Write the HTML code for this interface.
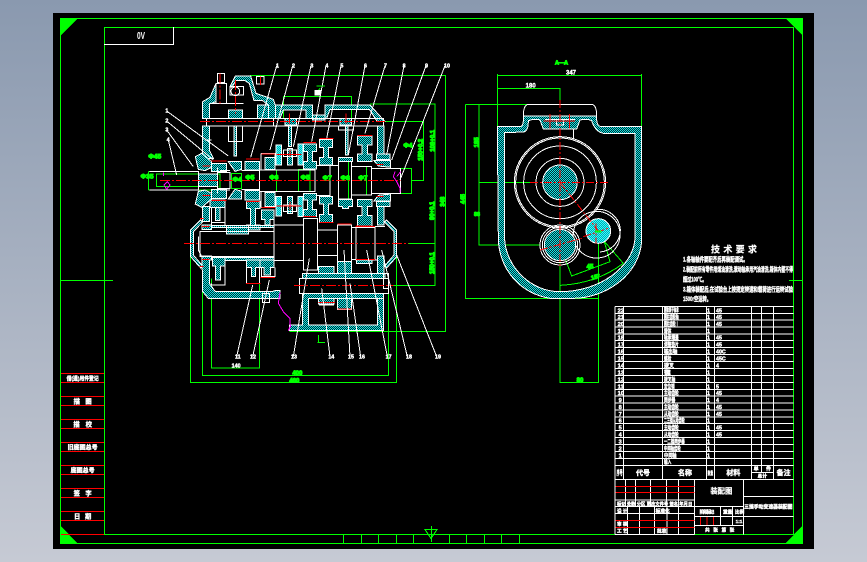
<!DOCTYPE html>
<html><head><meta charset="utf-8"><style>
html,body{margin:0;padding:0;width:867px;height:562px;overflow:hidden;background:linear-gradient(180deg,#8a99af 0%,#c6cad4 100%)}
svg{position:absolute;left:0;top:0}
text{font-family:"Liberation Sans","Noto Sans CJK SC",sans-serif;font-weight:bold}
.w{fill:#fff;stroke:#fff;stroke-width:1.2}
.g{fill:#0f0;stroke:#0f0;stroke-width:3}
.hat{fill:url(#h);stroke:#fff;stroke-width:3}
.wl{fill:none;stroke:#fff;stroke-width:3}
.gl{fill:none;stroke:#0f0;stroke-width:3}
.rl{fill:none;stroke:#f00;stroke-width:3}
.cl{fill:none;stroke:#f00;stroke-width:3;stroke-dasharray:30 6 6 6}
.ml{fill:none;stroke:#f0f;stroke-width:3}
</style></head><body>
<svg width="867" height="562" viewBox="0 0 867 562" shape-rendering="crispEdges">
<defs>
<pattern id="h" width="6" height="6" patternUnits="userSpaceOnUse"><rect width="6" height="6" fill="#002f33"/><path d="M0 0h3v3H0zM3 3h3v3H3z" fill="#17e6e6"/></pattern>
<pattern id="h2" width="6" height="6" patternUnits="userSpaceOnUse"><rect width="6" height="6" fill="#00a8b0"/><path d="M0 0h3v3H0zM3 3h3v3H3z" fill="#3ff"/></pattern>
</defs>
<rect x="53" y="13" width="761" height="536" fill="#000"/>
<!-- frames -->
<g fill="none" stroke="#0f0" stroke-width="1">
<rect x="60.5" y="18.5" width="742" height="525"/>
<rect x="104.5" y="27.5" width="689" height="507"/>
<path d="M343.5 534v9M361.5 534v9M378.5 534v9M396.5 534v9M413.5 534v9M449.5 534v9M466.5 534v9M484.5 534v9M501.5 534v9M519.5 534v9M60 280.5h53M789 280.5h14"/>
<path d="M431.5 526v16M425 529.5h12l-6 9z"/>
</g>
<path d="M60 18H78L60 36ZM785 18H803V36ZM803 525V544H785ZM60 525L78 544H60Z" fill="#0f0"/>
<path d="M104 44.5H173.5V27" fill="none" stroke="#fff"/>
<text x="141" y="39" font-size="10" fill="#fff" text-anchor="middle" textLength="8" lengthAdjust="spacingAndGlyphs">0V</text>

<!-- left column -->
<g transform="translate(50 360) scale(.33333)">
<path class="rl" d="M33 40H162M33 67H162M33 109H162M33 136H162M33 178H162M33 205H162M33 247H162M33 274H162M33 316H162M33 343H162M33 385H162M33 412H162M33 454H162M33 481H162M33 523H162"/>
<g text-anchor="middle">
<text class="w" x="98" y="61" font-size="17" textLength="96" lengthAdjust="spacingAndGlyphs">借(通)用件登记</text>
<text class="w" x="98" y="131" font-size="19" textLength="54" lengthAdjust="spacing">描 图</text>
<text class="w" x="98" y="200" font-size="19" textLength="56" lengthAdjust="spacing">描 校</text>
<text class="w" x="98" y="269" font-size="18" textLength="90" lengthAdjust="spacing">旧底图总号</text>
<text class="w" x="98" y="338" font-size="18" textLength="72" lengthAdjust="spacing">底图总号</text>
<text class="w" x="98" y="407" font-size="19" textLength="54" lengthAdjust="spacing">签 字</text>
<text class="w" x="98" y="476" font-size="19" textLength="52" lengthAdjust="spacing">日 期</text>
</g>
</g>

<!-- main view -->
<g transform="translate(130 50) scale(.33333)">
<!-- green dims -->
<path class="gl" d="M360 77H947V844H478M720 162H915V706H790M765 214H880V391H845M835 580H915M55 365H205M55 420H270V372H80V410H265M55 365V420M460 205V140H665V205M305 370H335V415H305ZM367 362H388V418H367M440 360V425M505 358H540V425H505ZM600 347V437M655 335V447M665 350H710V435H665M725 355H845V430H725M182 605V998H800V605M217 685V976H776V710M245 685V954H388V685M565 855V878M562 878H585"/>
<!-- housing -->
<path class="hat" d="M218 205V155L240 142L258 100V155L238 162V205Z"/>
<path class="hat" d="M218 228H238V300L250 325H218Z"/>
<path class="hat" d="M300 110L316 78H362L378 130L430 148L436 165V205H415V165L398 152H372L358 100L345 92H318L305 112Z"/>
<path class="hat" d="M382 165H415V205H382Z"/>
<path class="hat" d="M436 165H548V205H528V180H460L450 205H436Z"/>
<path class="hat" d="M548 195H585V210H548Z"/>
<path class="hat" d="M585 165H720L765 215H742L718 178H600L590 205H585Z"/>
<path class="hat" d="M742 228H762V318H742Z"/>
<path class="hat" d="M296 180H338V205H296ZM465 205H500V225H465ZM630 205H665V225H630Z"/>
<path class="hat" d="M312 228H320V318H312Z"/>
<path class="hat" d="M476 228H484V290H476ZM646 228H654V315H646Z"/>
<path class="wl" d="M296 228V275H338V228M460 228H508M625 228V240H670V228M230 205H760V228H230ZM430 205V228M225 270H245"/>
<path class="wl" d="M300 110H340V135H300Z"/>
<circle class="wl" cx="316" cy="124" r="13"/>
<path class="wl" d="M262 70H284V98H262ZM258 100H290V160H258ZM238 160H340M380 80H402V102H380Z"/>
<!-- left bearing -->
<path class="hat" d="M196 320L215 310L245 335V352L225 362L205 358Z"/>
<path class="hat" d="M196 462L215 472L245 447V430L225 420L205 424Z"/>
<path class="hat" d="M245 340H290V365H245ZM245 418H290V445H245Z"/>
<path class="hat" d="M295 335H335V358L315 364ZM295 447H335V424L315 418Z"/>
<path class="hat" d="M345 335H388V360H345ZM345 422H388V450H345Z"/>
<path class="hat" d="M405 322H435V358H405ZM405 427H435V470H405Z"/>
<path class="wl" d="M393 310H435V322M393 310V358M393 472H435M393 425V472"/>
<path class="hat" style="fill:url(#h2)" d="M438 285H454V345H438ZM438 440H454V498H438ZM504 282H519V345H504ZM504 440H519V500H504Z"/>
<path class="hat" d="M472 295H488V345H472ZM472 440H488V490H472Z"/>
<path class="wl" d="M460 300H500V320H460ZM460 465H500V485H460Z"/>
<!-- I-section gears -->
<path class="hat" d="M520 282H560V305H548V335H560V357H520V335H532V305H520Z"/>
<path class="hat" d="M520 430H560V450H548V478H560V500H520V478H532V450H520Z"/>
<path class="hat" d="M568 268H608V292H596V322H608V345H568V322H580V292H568Z"/>
<path class="hat" d="M568 440H608V462H596V494H608V518H568V494H580V462H568Z"/>
<path class="hat" d="M625 322H668V335H625ZM625 448H668V470H655V475H638V470H625Z"/>
<path class="hat" d="M682 258H726V285H712V312H726V335H682V312H696V285H682Z"/>
<path class="hat" d="M682 448H726V470H712V497H726V528H682V497H696V470H682Z"/>
<path class="hat" d="M732 332H782V352L745 348ZM732 453H782V432L745 436Z"/>
<path class="hat" d="M740 312H780V328H740ZM740 470H780V455H740Z"/>
<!-- shaft -->
<path class="wl" d="M58 365H205V420H58M205 372H262V410H205M262 368H300V416H262ZM335 362H388V418H335M388 360H555V425H388M558 347H600V437H558M600 347H625M625 335H665V447H625ZM665 350H725V435H665M725 355H812V430H725"/>
<path class="hat" d="M205 372H262V410H205Z"/>
<path class="wl" d="M262 352V430M270 362H300M270 420H300"/>
<!-- lower gears -->
<path class="hat" d="M240 450H285V472H240Z"/>
<path class="hat" d="M256 472H270V512H256Z"/>
<path class="wl" d="M245 472V530H285V472M245 518H285"/>
<path class="hat" d="M350 455H390V475H376V525H390V540H350V525H362V475H350Z"/>
<path class="hat" d="M395 480H432V508H420V525H405V508H395Z"/>
<!-- lower left body -->
<path class="hat" d="M182 540L212 510L218 516L190 545V615L218 648L212 654L182 620Z"/>
<path class="hat" d="M800 540L770 510L764 516L792 545V615L764 648L770 654L800 620Z"/>
<path class="hat" d="M218 470H238V515H218ZM742 470H762V525H742Z"/>
<path class="hat" d="M216 525H245V538H216ZM290 527H355V552H290ZM245 527H432V533H245Z"/>
<path class="hat" d="M216 618H245V630H238V700L256 725H425L435 722H450V745H235L218 725Z"/>
<path class="hat" d="M285 622H432V631H285ZM248 622H285V648H272V690H256V648H248Z"/>
<path class="hat" d="M350 630H390V652H376V680H364V652H350ZM390 630H432V652H422V675H402V652H390Z"/>
<path class="wl" d="M210 545H432V620H210ZM205 560V600L215 620M245 700V705H285V650M350 652V700H388V652M395 652V680H435V652M432 490V630M432 525H520M432 631H520"/>
<path class="wl" d="M520 505H562V660H520ZM562 540H622M562 616H622M622 525H665V635H622ZM665 532H678M665 628H678M678 532H735V630H678ZM735 530H765M735 630H765"/>
<path class="hat" d="M566 650H612V680H566ZM622 635H665V672H622ZM742 618H762V680H742ZM680 630H726V640H680Z"/>
<!-- lower box -->
<path class="hat" d="M518 670H765V685H518Z"/>
<path class="hat" d="M518 730H760V745H535V825H743V745H760V842H478V825H518Z"/>
<path class="hat" d="M565 745H612V762H565ZM622 745H665V778H622Z"/>
<path class="wl" d="M508 686H776V730H508ZM508 686V730M568 760V765H612M622 778H665"/>
<path class="wl" d="M760 670H776V716H760Z"/>
<path class="wl" d="M398 730H418V758H398Z"/>
<!-- centre lines -->
<path class="cl" d="M210 214H765M90 391H812M162 580H835M492 706H790M316 90V190M392 80V105M270 70V165M478 190V220M648 190V220"/>
<!-- red marks -->
<path class="rl" d="M520 278H558M568 265H610M682 257H726M348 327H388M395 312H435M245 333H290M218 348H240M218 436H240M245 451H290M350 455H388M395 472H435M520 500H558M568 517H610M622 522H665M678 528H725M740 343H760M740 440H760M440 313H515M440 468H515M480 455V480M480 300V320M676 530H735M565 757H615M622 777H665M348 700H392M392 682H435M216 530H238M216 628H238M208 650H220M210 505H222M678 628H735"/>
<!-- magenta -->
<path class="ml" d="M100 368V378M112 395L102 405L110 418L120 405ZM795 365L790 380L800 395L810 415V428M812 365L800 380M450 727L445 760L460 785L480 805L481 830L475 842"/>
<!-- leaders -->
<path class="wl" d="M440 47L362 322M488 47L420 300M543 47L490 290M588 47L545 275M633 47L590 265M705 47L655 315M765 47L705 250M822 47L770 315M888 47L785 330M945 47L810 390M110 183L295 318M110 213L250 330M110 240L190 350M115 270L140 375M320 920L368 705M368 920L418 690M490 920L538 625M600 920L575 715M660 920L642 600M692 920L660 700M772 920L710 600M832 920L755 600M920 920L800 615"/>
<g font-size="16">
<text x="438" y="52" class="w">1</text><text x="486" y="52" class="w">2</text><text x="541" y="52" class="w">3</text><text x="586" y="52" class="w">4</text><text x="631" y="52" class="w">5</text><text x="702" y="52" class="w">6</text><text x="762" y="52" class="w">7</text><text x="818" y="52" class="w">8</text><text x="885" y="52" class="w">9</text><text x="942" y="52" class="w">10</text>
<text x="106" y="188" class="w">1</text><text x="106" y="218" class="w">2</text><text x="106" y="245" class="w">3</text><text x="110" y="275" class="w">4</text>
<text x="315" y="926" class="w">11</text><text x="360" y="926" class="w">12</text><text x="483" y="926" class="w">13</text><text x="595" y="926" class="w">14</text><text x="654" y="926" class="w">15</text><text x="687" y="926" class="w">16</text><text x="767" y="926" class="w">17</text><text x="828" y="926" class="w">18</text><text x="915" y="926" class="w">19</text>
<text x="305" y="952" class="w">140</text>
</g>
<!-- green dim text -->
<g class="g" font-size="20">
<text x="55" y="325">Φ45</text><text x="32" y="385">Φ35</text><text x="308" y="395">Φ4</text><text x="346" y="388">Φ5</text><text x="418" y="388">Φ6</text><text x="512" y="388">Φ5</text><text x="578" y="390">Φ7</text><text x="632" y="390">Φ8</text><text x="685" y="390">Φ7</text><text x="820" y="292">Φ4</text>
<text x="487" y="975" font-size="18">400</text><text x="478" y="997" font-size="18">460</text>
<text transform="translate(878 332) rotate(-90)" font-size="18">150+0.2</text>
<text transform="translate(914 305) rotate(-90)" font-size="18">108+0.1</text>
<text transform="translate(912 510) rotate(-90)" font-size="18">90+0.1</text>
<text transform="translate(944 470) rotate(-90)" font-size="18">348</text>
<text transform="translate(912 672) rotate(-90)" font-size="18">150+0.1</text>
<path d="M555 135L570 115M560 108H585" class="gl"/>
</g>
<path class="wl" d="M555 135H572V122H555Z" style="fill:#fff"/>
</g>

<!-- section view -->
<g transform="translate(460 50) scale(.33333)">
<path class="gl" d="M112 72V230M545 72V230M112 76H545M112 115H300V150M17 163H250M17 163V745H415M57 163V585M55 397H210M55 585H240M300 590V997H415V560M302 590L335 678L450 635L430 565M302 706Q410 700 490 640L425 565"/>
<path class="hat" style="fill-rule:evenodd" d="M112 230H178Q192 232 190 198H410Q408 232 428 230H545V570C540 680 430 745 340 745H270C180 730 120 660 115 570ZM134 248V570C140 650 210 725 300 725C420 725 520 650 525 565V250H430Q405 245 395 212Q380 205 360 210L350 237H250L240 210Q225 205 205 212Q205 245 190 246Z"/>
<path class="wl" d="M190 198Q190 165 205 163H395Q410 165 410 198H190M340 237V265"/>
<g class="wl">
<circle cx="300" cy="397" r="137"/><circle cx="300" cy="397" r="133"/><circle cx="300" cy="397" r="109"/><circle cx="300" cy="397" r="72"/>
<circle cx="300" cy="585" r="60"/><circle cx="300" cy="585" r="53"/>
<path d="M349 520A70 70 0 1 1 362 605A68 68 0 0 1 349 520M410 478A66 66 0 0 1 481 540A66 66 0 0 1 420 606"/>
</g>
<circle class="hat" cx="300" cy="397" r="52"/>
<circle class="hat" cx="300" cy="585" r="47"/>
<circle class="hat" cx="415" cy="543" r="37" style="fill:url(#h2)"/>
<path class="wl" d="M255 208H345M290 208V225H310V208"/>
<path class="rl" d="M270 192V235M328 192V235M250 213H345"/>
<path class="cl" style="stroke-dasharray:24 6 6 6" d="M300 150V650M210 397H445M240 600L365 565M300 397L415 543M370 560L445 535M408 520V580"/>
<path class="gl" style="stroke-width:6" d="M405 545H425"/>
<g class="g" font-size="18">
<text x="285" y="43" font-size="16">A—A</text>
<text x="318" y="74" class="w">347</text>
<text x="197" y="113" class="w">180</text>
<text x="350" y="996">80</text>
<text x="380" y="656">45</text>
<text transform="translate(395 690) rotate(-15)">15°</text>
<text transform="translate(55 292) rotate(-90)">185</text>
<text x="42" y="498" font-size="16">88</text>
<text transform="translate(15 462) rotate(-90)">445</text>
</g>
</g>

<!-- tech + table -->
<g transform="translate(605 235) scale(.33333)">
<text class="w" x="318" y="52" font-size="27" textLength="138" lengthAdjust="spacing" style="stroke-width:.6">技 术 要 求</text>
<g font-size="19">
<text class="w" x="234" y="80" textLength="194" lengthAdjust="spacingAndGlyphs">1.各轴轴件要配齐后再装配调试。</text>
<text class="w" x="234" y="110" textLength="330" lengthAdjust="spacingAndGlyphs">2.装配前所有零件用煤油清洗,滚动轴承用汽油清洗,箱体内壁不得</text>
<text class="w" x="234" y="140" textLength="70" lengthAdjust="spacingAndGlyphs">超过100℃。</text>
<text class="w" x="234" y="170" textLength="330" lengthAdjust="spacingAndGlyphs">3.箱体装配后,在试验台上按规定转速和载荷进行运转试验</text>
<text class="w" x="234" y="198" textLength="84" lengthAdjust="spacingAndGlyphs">1500r空运转。</text>
</g>
<path class="wl" d="M30 214H565M30 235H565M30 255H565M30 276H565M30 297H565M30 317H565M30 338H565M30 359H565M30 380H565M30 400H565M30 421H565M30 442H565M30 463H565M30 483H565M30 504H565M30 525H565M30 546H565M30 566H565M30 587H565M30 608H565M30 629H565M30 650H565M30 670H565M30 691H565M30 733H565M30 214V898M56 214V733M172 214V733M304 214V733M328 214V733M440 214V733M469 214V712M505 214V733M440 712H505"/>
<!-- title block -->
<path class="wl" d="M268 733V898M415 733V898M415 784H565M415 844H565M268 814H415M268 844H415M268 871H415M347 814V871M383 814V871M30 795H268M30 815H268M30 836H268M30 898H268M62 733V815M92 733V815M137 733V815M184 733V815M221 733V815M68 815V898M104 815V898M148 815V898M186 815V898M221 815V898"/>
<path class="rl" d="M32 755H268M32 773H268M32 856H268M32 877H268M287 846V870M306 846V870M326 846V870"/>
<g font-size="17">
<text class="w" x="38" y="232">22</text><text class="w" x="38" y="252">21</text><text class="w" x="38" y="273">20</text><text class="w" x="38" y="294">19</text><text class="w" x="38" y="314">18</text><text class="w" x="38" y="335">17</text><text class="w" x="38" y="356">16</text><text class="w" x="38" y="377">15</text><text class="w" x="38" y="397">14</text><text class="w" x="38" y="418">13</text><text class="w" x="38" y="439">12</text><text class="w" x="38" y="460">11</text><text class="w" x="38" y="480">10</text><text class="w" x="41" y="501">9</text><text class="w" x="41" y="522">8</text><text class="w" x="41" y="543">7</text><text class="w" x="41" y="563">6</text><text class="w" x="41" y="584">5</text><text class="w" x="41" y="605">4</text><text class="w" x="41" y="626">3</text><text class="w" x="41" y="647">2</text><text class="w" x="41" y="667">1</text>
<text class="w" x="177" y="231" textLength="44" lengthAdjust="spacingAndGlyphs">圆锥滚子轴承</text>
<text class="w" x="177" y="252" textLength="44" lengthAdjust="spacingAndGlyphs">圆柱齿轮轴</text>
<text class="w" x="177" y="273" textLength="44" lengthAdjust="spacingAndGlyphs">圆柱齿轮Ⅰ</text>
<text class="w" x="177" y="294" textLength="22" lengthAdjust="spacingAndGlyphs">箱体</text>
<text class="w" x="177" y="314" textLength="44" lengthAdjust="spacingAndGlyphs">轴承端盖</text>
<text class="w" x="177" y="335" textLength="44" lengthAdjust="spacingAndGlyphs">调整垫片</text>
<text class="w" x="177" y="356" textLength="40" lengthAdjust="spacingAndGlyphs">输出轴</text>
<text class="w" x="177" y="377" textLength="22" lengthAdjust="spacingAndGlyphs">螺栓</text>
<text class="w" x="177" y="397" textLength="30" lengthAdjust="spacingAndGlyphs">拨叉</text>
<text class="w" x="177" y="418" textLength="20" lengthAdjust="spacingAndGlyphs">键</text>
<text class="w" x="177" y="439" textLength="34" lengthAdjust="spacingAndGlyphs">拨叉轴</text>
<text class="w" x="177" y="460" textLength="32" lengthAdjust="spacingAndGlyphs">定位销</text>
<text class="w" x="177" y="480" textLength="44" lengthAdjust="spacingAndGlyphs">主动齿轮</text>
<text class="w" x="177" y="501" textLength="34" lengthAdjust="spacingAndGlyphs">同步器</text>
<text class="w" x="177" y="522" textLength="44" lengthAdjust="spacingAndGlyphs">主动齿轮</text>
<text class="w" x="177" y="543" textLength="44" lengthAdjust="spacingAndGlyphs">从动齿轮</text>
<text class="w" x="177" y="563" textLength="62" lengthAdjust="spacingAndGlyphs">二三挡从动齿轮</text>
<text class="w" x="177" y="584" textLength="44" lengthAdjust="spacingAndGlyphs">主动齿轮</text>
<text class="w" x="177" y="605" textLength="44" lengthAdjust="spacingAndGlyphs">从动齿轮</text>
<text class="w" x="177" y="626" textLength="62" lengthAdjust="spacingAndGlyphs">一二挡同步器</text>
<text class="w" x="177" y="647" textLength="50" lengthAdjust="spacingAndGlyphs">中间轴齿轮</text>
<text class="w" x="177" y="667" textLength="38" lengthAdjust="spacingAndGlyphs">中间轴</text>
<text class="w" x="177" y="687" textLength="22" lengthAdjust="spacingAndGlyphs">输入</text>
</g>
<g font-size="16">
<text class="w" x="306" y="232">1</text><text class="w" x="306" y="252">1</text><text class="w" x="306" y="273">1</text><text class="w" x="306" y="294">1</text><text class="w" x="306" y="314">1</text><text class="w" x="306" y="335">1</text><text class="w" x="306" y="356">1</text><text class="w" x="306" y="377">1</text><text class="w" x="306" y="397">1</text><text class="w" x="306" y="418">1</text><text class="w" x="306" y="439">1</text><text class="w" x="306" y="460">1</text><text class="w" x="306" y="480">1</text><text class="w" x="306" y="501">1</text><text class="w" x="306" y="522">1</text><text class="w" x="306" y="543">1</text><text class="w" x="306" y="563">1</text><text class="w" x="306" y="584">1</text><text class="w" x="306" y="605">1</text><text class="w" x="306" y="626">1</text><text class="w" x="306" y="647">1</text><text class="w" x="306" y="667">1</text>
<text class="w" x="333" y="232">45</text><text class="w" x="333" y="252">45</text><text class="w" x="333" y="273">45</text><text class="w" x="333" y="314">45</text><text class="w" x="333" y="335">45</text><text class="w" x="333" y="356">40C</text><text class="w" x="333" y="377">45C</text><text class="w" x="333" y="397">4</text><text class="w" x="333" y="460">5</text><text class="w" x="333" y="480">45</text><text class="w" x="333" y="501">4</text><text class="w" x="333" y="522">45</text><text class="w" x="333" y="543">45</text><text class="w" x="333" y="584">45</text><text class="w" x="333" y="605">45</text>
</g>
<g font-size="21" text-anchor="middle">
<text class="w" x="44" y="720" textLength="18" lengthAdjust="spacingAndGlyphs">序号</text><text class="w" x="114" y="720">代号</text><text class="w" x="240" y="720">名称</text><text class="w" x="316" y="720" font-size="15" textLength="16" lengthAdjust="spacingAndGlyphs">数量</text><text class="w" x="385" y="720">材料</text><text class="w" x="472" y="707" font-size="15" textLength="52" lengthAdjust="spacing">单 件</text><text class="w" x="472" y="728" font-size="14">总计</text><text class="w" x="536" y="720">备注</text>
<text class="w" x="349" y="776" font-size="22" style="stroke-width:.8">装配图</text>
<text class="w" x="490" y="820" font-size="16" textLength="145" lengthAdjust="spacingAndGlyphs">三挡手动变速器装配图</text>
</g>
<g font-size="14">
<text class="w" x="36" y="811" textLength="226" lengthAdjust="spacingAndGlyphs">标记 处数 分区 更改文件号 签名 年月日</text>
<text class="w" x="36" y="832">设 计</text><text class="w" x="152" y="832">标准化</text>
<text class="w" x="36" y="872">审 核</text><text class="w" x="36" y="893">工 艺</text><text class="w" x="156" y="893">批准</text>
<text class="w" x="284" y="835" textLength="44">阶段标记</text><text class="w" x="354" y="835">重量</text><text class="w" x="390" y="835">比例</text>
<text class="w" x="392" y="864">1:1</text>
<text class="w" x="300" y="890" textLength="88" lengthAdjust="spacing">共 张 第 张</text>
</g>
</g>
</svg>
</body></html>
